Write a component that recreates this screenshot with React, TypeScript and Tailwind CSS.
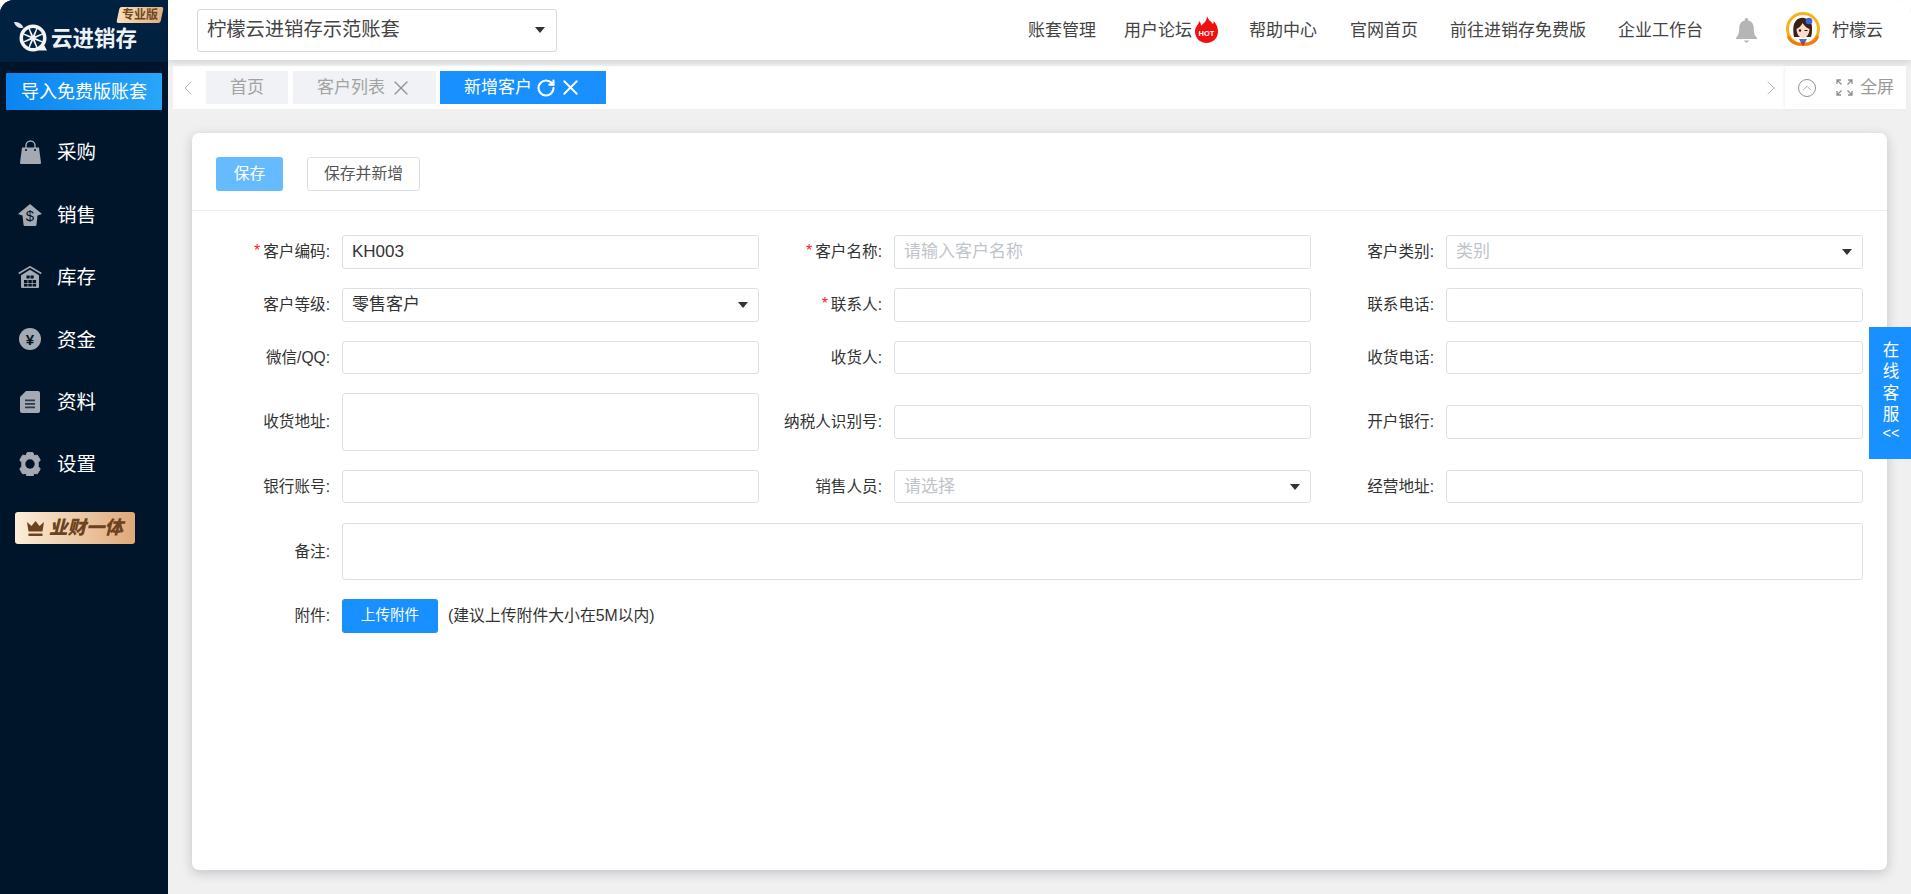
import React from "react";
import { ChevronLeft, ChevronRight, X, RotateCw, ChevronUp } from "lucide-react";

const ICON = "#a4aab3";
const BG = "#00152a";

function Bag() {
  return (
    <svg width="21" height="24" viewBox="0 0 21 24">
      <path d="M6 9V5.500a4.500 4.500 0 0 1 9 0V9" fill="none" stroke={ICON} strokeWidth="1.400" />
      <path d="M2 7.500h17l2 15.500a1 1 0 0 1-1 1H1a1 1 0 0 1-1-1z" fill={ICON} />
      <circle cx="6" cy="10" r="1.100" fill={BG} />
      <circle cx="15" cy="10" r="1.100" fill={BG} />
    </svg>
  );
}
function Sale() {
  return (
    <svg width="24" height="22" viewBox="0 0 24 22">
      <path d="M12 0 24 10 19.500 11.500 18.500 20.800Q18.400 22 17 22H7Q5.600 22 5.500 20.800L4.500 11.500 0 10z" fill={ICON} />
      <text x="12" y="17" textAnchor="middle" fontSize="15" fontWeight="400" fill={BG} fontFamily="Liberation Sans, sans-serif">$</text>
    </svg>
  );
}
function Store() {
  return (
    <svg width="24" height="22" viewBox="0 0 24 22">
      <path d="M.7 7.500 12 .8 23.300 7.500" fill="none" stroke={ICON} strokeWidth="1.600" />
      <path d="M12 3.800 21 9.200V21a1 1 0 0 1-1 1H4a1 1 0 0 1-1-1V9.200z" fill={ICON} />
      <path d="M8.500 9.500h3.200v3H8.500zM12.500 9.500h3.200v3h-3.200zM6 14h3.500v3H6zM10.300 14h3.500v3h-3.500zM14.600 14h3.500v3h-3.500zM6 17.800h3.500v2.700H6zM10.300 17.800h3.500v2.700h-3.500zM14.600 17.800h3.500v2.700h-3.500z" fill={BG} />
    </svg>
  );
}
function Money() {
  return (
    <svg width="22" height="22" viewBox="0 0 22 22">
      <circle cx="11" cy="11" r="11" fill={ICON} />
      <text x="11" y="16.500" textAnchor="middle" fontSize="15" fontWeight="700" fill={BG} fontFamily="Liberation Sans, sans-serif">¥</text>
    </svg>
  );
}
function Doc() {
  return (
    <svg width="20" height="22" viewBox="0 0 20 22">
      <path d="M6 0h12a2 2 0 0 1 2 2v18a2 2 0 0 1-2 2H2a2 2 0 0 1-2-2V6z" fill={ICON} />
      <path d="M5 8.500h10v1.700H5zM5 12h10v1.700H5zM5 15.500h10v1.700H5z" fill={BG} fillOpacity="0.75" />
    </svg>
  );
}
function Gear() {
  return (
    <svg width="24" height="24" viewBox="0 0 24 24">
      <path
        d="M9.200 0.600h5.600l1.300 3 3.300-.4 2.800 4.800-2 2.600 0 3.800 2 2.600-2.800 4.800-3.300-.4-1.300 3H9.200l-1.300-3-3.300.4-2.800-4.800 2-2.600 0-3.800-2-2.600 2.800-4.800 3.300.4z"
        fill={ICON}
        stroke={ICON}
        strokeLinejoin="round"
      />
      <circle cx="12" cy="12" r="4.700" fill={BG} />
    </svg>
  );
}

function LemonLogo() {
  const spokes = [0, 45, 90, 135, 180, 225, 270, 315];
  return (
    <svg width="36" height="32" viewBox="0 0 36 32">
      <path d="M1 1c5 0 8 2 9.500 5.800C6 7.500 2.500 6 1 1z" fill="#dfe5ea" />
      <circle cx="20" cy="17" r="13.500" fill="#f2f4f6" />
      <path d="M31 24l3 5.500-9 0z" fill="#f2f4f6" />
      {spokes.map((a) => (
        <path
          key={a}
          d="M20 14.500 L16.800 7.500 A10 10 0 0 1 23.200 7.500 Z"
          fill="#03243f"
          transform={`rotate(${a} 20 17)`}
        />
      ))}
    </svg>
  );
}

function Flame() {
  return (
    <svg width="23" height="27" viewBox="0 0 23 27">
      <path
        d="M12 0c1 4 4 5 6 8 .6-1 .8-2 .8-3 3 3.500 4.200 7 4.200 10.500C23 22 18 27 11.500 27S0 22 0 15.500C0 11 3 9 4.500 5c1 1.500 1.500 3 1.500 4.500C9 7.500 12 4.500 12 0z"
        fill="#f01010"
      />
      <text x="11.500" y="20" textAnchor="middle" fontSize="7.500" fontWeight="700" fill="#fff" fontFamily="Liberation Sans, sans-serif">HOT</text>
    </svg>
  );
}

function BellIcon() {
  return (
    <svg width="21" height="25" viewBox="0 0 21 25">
      <path d="M10.500 0a1.800 1.800 0 0 1 1.800 1.800v.7C16 3.400 17.800 6.500 17.800 10.500c0 5 1 7 3.200 9.300V21H0v-1.200C2.200 17.500 3.200 15.500 3.200 10.500c0-4 1.800-7.100 5.500-8v-.7A1.800 1.800 0 0 1 10.500 0z" fill="#b5b5b5" />
      <path d="M7.500 22.500h6L10.500 25z" fill="#b5b5b5" />
    </svg>
  );
}

function Avatar() {
  return (
    <svg width="34" height="36" viewBox="0 0 34 36">
      <circle cx="17" cy="17" r="15.500" fill="#fff" stroke="#f6b21c" strokeWidth="3" />
      <path d="M3 23c2 5 7 8 14 8s12-3 14-8l2 2c-2 6-8 9-16 9S3 31 1 25z" fill="#ee7d14" />
      <path d="M8 25c-1-6-1-9 0-13 2-5 6-7 10-6 5 1 8 4 8 9 0 4 0 7-1 10z" fill="#3a2118" />
      <path d="M10.500 17c2-1 5-3 6-6 2 3 4 5 7 6 0 5-3 9-6.500 9s-6.500-4-6.500-9z" fill="#fbdcc6" />
      <circle cx="14" cy="18.500" r="1.200" fill="#2a1710" />
      <path d="M18.500 18.500h3" stroke="#2a1710" strokeWidth="1" />
      <circle cx="23" cy="9" r="3.300" fill="#4060d8" />
      <path d="M13 27h8l-2 4h-4z" fill="#3f74d8" />
      <path d="M15 31l2-2 2 2-2 3z" fill="#d8341c" />
    </svg>
  );
}

function SideItem({ icon, label }: { icon: React.ReactNode; label: string }) {
  return (
    <div className="flex h-[62.4px] items-center">
      <div className="flex w-[57px] justify-center pl-[3px]">{icon}</div>
      <span className="translate-y-[1px] text-[19.500px] leading-none text-white">{label}</span>
    </div>
  );
}

function Caret() {
  return <span className="h-0 w-0 border-x-[5px] border-t-[6px] border-x-transparent border-t-[#333]" />;
}

function Field({
  label,
  required,
  value,
  placeholder,
  caret,
  h = "h-[34px]",
}: {
  label: string;
  required?: boolean;
  value?: string;
  placeholder?: string;
  caret?: boolean;
  h?: string;
}) {
  return (
    <div className="flex w-[552px] items-center">
      <div className="flex w-[120px] items-start justify-end text-[15.600px] leading-none whitespace-nowrap text-[#333]">
        {required && <span className="mr-[3px] -translate-y-[1px] text-[16px] leading-none text-[#f5222d]">*</span>}
        <span>{label}:</span>
      </div>
      <div
        className={`ml-[12px] flex w-[417px] items-center justify-between rounded-[3px] border border-[#dcdfe6] bg-white pr-[10px] pl-[9px] text-[17px] ${h}`}
      >
        {value && <span className="text-[#333]">{value}</span>}
        {placeholder && <span className="text-[#c0c4cc]">{placeholder}</span>}
        {!value && !placeholder && <span />}
        {caret && <Caret />}
      </div>
    </div>
  );
}

function NavLink({ children, className = "" }: { children: React.ReactNode; className?: string }) {
  return <span className={`text-[17px] leading-none whitespace-nowrap text-[#444] ${className}`}>{children}</span>;
}

export default function App() {
  return (
    <div
      className="flex h-[894px] w-[1911px] overflow-hidden rounded-tl-[14px] rounded-tr-[14px] bg-[#f0f0f0]"
      style={{ fontFamily: '"Liberation Sans", "Noto Sans CJK SC", sans-serif' }}
    >
      {/* sidebar */}
      <aside className="flex w-[168px] shrink-0 flex-col bg-[#00152a]">
        <div className="relative flex h-[62px] items-center bg-[#002140] pt-[12px] pl-[13px]">
          <LemonLogo />
          <span className="ml-[2px] translate-y-[3px] text-[21.500px] leading-none font-bold text-[#eef1f4]">云进销存</span>
          <span className="absolute top-[7px] left-[118px] flex h-[16px] w-[44px] -skew-x-12 items-center justify-center rounded-[2px] bg-gradient-to-r from-[#f7dfbc] to-[#e2ae80]">
            <span className="skew-x-12 text-[12px] leading-none font-bold text-[#6e4822]">专业版</span>
          </span>
        </div>
        <div className="mx-[6px] mt-[11px] flex h-[37px] items-center justify-center rounded-[1px] bg-gradient-to-r from-[#0a84f0] to-[#27a6f9] text-[18px] leading-none text-white">
          导入免费版账套
        </div>
        <div className="mt-[11px] flex flex-col">
          <SideItem icon={<Bag />} label="采购" />
          <SideItem icon={<Sale />} label="销售" />
          <SideItem icon={<Store />} label="库存" />
          <SideItem icon={<Money />} label="资金" />
          <SideItem icon={<Doc />} label="资料" />
          <SideItem icon={<Gear />} label="设置" />
        </div>
        <div className="mt-[17px] ml-[15px] flex h-[32px] w-[120px] items-center justify-center gap-[5px] rounded-[3px] bg-gradient-to-r from-[#fdeed8] to-[#dfa878]">
          <svg width="17" height="15" viewBox="0 0 17 15">
            <path d="M0 1l4.500 4L8.500 0l4 5L17 1l-1.500 9.500h-14z" fill="#6b4320" />
            <path d="M1.500 12.500h14V15h-14z" fill="#6b4320" />
          </svg>
          <span className="text-[18.500px] leading-none font-black text-[#6b4320] italic">业财一体</span>
        </div>
      </aside>

      {/* main */}
      <div className="relative flex min-w-0 flex-1 flex-col">
        <header className="z-10 flex h-[60px] shrink-0 items-center bg-white pr-[28px] pl-[29px] shadow-[0_2px_6px_rgba(0,21,41,0.14)]">
          <div className="flex h-[43px] w-[360px] items-center justify-between rounded-[3px] border border-[#d4d7dc] pr-[11px] pl-[9px] text-[19.300px] text-[#444]">
            <span>柠檬云进销存示范账套</span>
            <Caret />
          </div>
          <div className="ml-auto flex items-center">
            <NavLink>账套管理</NavLink>
            <NavLink className="ml-[28px]">用户论坛</NavLink>
            <span className="ml-[3px] -translate-y-[1px]">
              <Flame />
            </span>
            <NavLink className="ml-[31px]">帮助中心</NavLink>
            <NavLink className="ml-[33px]">官网首页</NavLink>
            <NavLink className="ml-[32px]">前往进销存免费版</NavLink>
            <NavLink className="ml-[32px]">企业工作台</NavLink>
            <span className="ml-[33px]">
              <BellIcon />
            </span>
            <span className="ml-[29px]">
              <Avatar />
            </span>
            <NavLink className="ml-[12px]">柠檬云</NavLink>
          </div>
        </header>

        {/* tab bar */}
        <div className="mt-[6px] flex h-[43px] shrink-0 items-center pr-[5px] pl-[5px]">
          <div className="flex h-full flex-1 items-center bg-white">
            <ChevronLeft className="ml-[3px]" size={24} strokeWidth={1} color="#b4b4b4" />
            <div className="ml-[6px] flex h-[33px] w-[82px] items-center justify-center bg-[#f0f2f5] text-[17px] text-[#a3a3a3]">
              首页
            </div>
            <div className="ml-[5px] flex h-[33px] w-[143px] items-center bg-[#f0f2f5] pl-[24px] text-[17px] text-[#a3a3a3]">
              客户列表
              <X className="ml-[4px]" size={24} strokeWidth={1.200} color="#909090" />
            </div>
            <div className="ml-[4px] flex h-[33px] w-[166px] items-center bg-[#1890ff] pl-[24px] text-[17px] text-white">
              新增客户
              <RotateCw className="ml-[4px]" size={20} strokeWidth={2.600} color="#fff" />
              <X className="ml-[2px]" size={25} strokeWidth={1.800} color="#fff" />
            </div>
            <ChevronRight className="mr-[2px] ml-auto" size={24} strokeWidth={1} color="#b4b4b4" />
          </div>
          <div className="flex h-full w-[121px] items-center bg-white pl-[13px] text-[#999] shadow-[-1px_0_3px_rgba(0,0,0,0.06)]">
            <span className="flex h-[18px] w-[18px] items-center justify-center rounded-full border border-[#8f8f8f]">
              <ChevronUp size={14} strokeWidth={1.300} color="#8f8f8f" />
            </span>
            <svg className="ml-[20px]" width="17" height="17" viewBox="0 0 17 17" fill="none" stroke="#8f8f8f" strokeWidth="1.300">
              <path d="M1 5V1h4M1 1l4.500 4.500M12 1h4v4M16 1l-4.500 4.500M1 12v4h4M1 16l4.500-4.500M16 12v4h-4M16 16l-4.500-4.500" />
            </svg>
            <span className="ml-[7px] text-[17px] leading-none">全屏</span>
          </div>
        </div>

        {/* card */}
        <main className="mx-[24px] mt-[24px] mb-[24px] flex min-h-0 flex-1 flex-col rounded-[7px] bg-white shadow-[0_3px_12px_rgba(0,21,41,0.2)]">
          <div className="flex h-[78px] shrink-0 items-center gap-[24px] border-b border-[#ebeef5] pt-[4px] pl-[24px]">
            <button className="flex h-[34px] w-[67px] items-center justify-center rounded-[3px] bg-[#66bbff] text-[15.840px] text-white">
              保存
            </button>
            <button className="flex h-[34px] w-[113px] items-center justify-center rounded-[3px] border border-[#dcdfe6] bg-white text-[15.840px] text-[#555]">
              保存并新增
            </button>
          </div>
          <div className="flex flex-col gap-[19px] pt-[24px] pl-[18px]">
            <div className="flex">
              <Field label="客户编码" required value="KH003" />
              <Field label="客户名称" required placeholder="请输入客户名称" />
              <Field label="客户类别" placeholder="类别" caret />
            </div>
            <div className="flex">
              <Field label="客户等级" value="零售客户" caret />
              <Field label="联系人" required />
              <Field label="联系电话" />
            </div>
            <div className="flex">
              <Field label="微信/QQ" h="h-[33px]" />
              <Field label="收货人" h="h-[33px]" />
              <Field label="收货电话" h="h-[33px]" />
            </div>
            <div className="flex">
              <Field label="收货地址" h="h-[58px]" />
              <Field label="纳税人识别号" />
              <Field label="开户银行" />
            </div>
            <div className="flex">
              <Field label="银行账号" h="h-[33px]" />
              <Field label="销售人员" placeholder="请选择" caret h="h-[33px]" />
              <Field label="经营地址" h="h-[33px]" />
            </div>
            <div className="mt-[1px] flex items-center">
              <div className="w-[120px] text-right text-[15.600px] leading-none text-[#333]">备注:</div>
              <div className="ml-[12px] h-[57px] w-[1521px] rounded-[3px] border border-[#dcdfe6] bg-white" />
            </div>
            <div className="flex items-center">
              <div className="w-[120px] text-right text-[15.600px] leading-none text-[#333]">附件:</div>
              <button className="ml-[12px] flex h-[34px] w-[96px] items-center justify-center rounded-[3px] bg-[#1890ff] text-[14.600px] text-white">
                上传附件
              </button>
              <span className="ml-[10px] text-[15.840px] leading-none text-[#333]">(建议上传附件大小在5M以内)</span>
            </div>
          </div>
        </main>

        {/* online service */}
        <div className="absolute top-[327px] right-0 flex h-[132px] w-[42px] flex-col items-center bg-[#1890ff] pt-[13px] pl-[2px] text-[16.500px] leading-[21.400px] text-white">
          <span>在</span>
          <span>线</span>
          <span>客</span>
          <span>服</span>
          <span className="text-[14.500px] leading-[14px]">&lt;&lt;</span>
        </div>
      </div>
    </div>
  );
}
